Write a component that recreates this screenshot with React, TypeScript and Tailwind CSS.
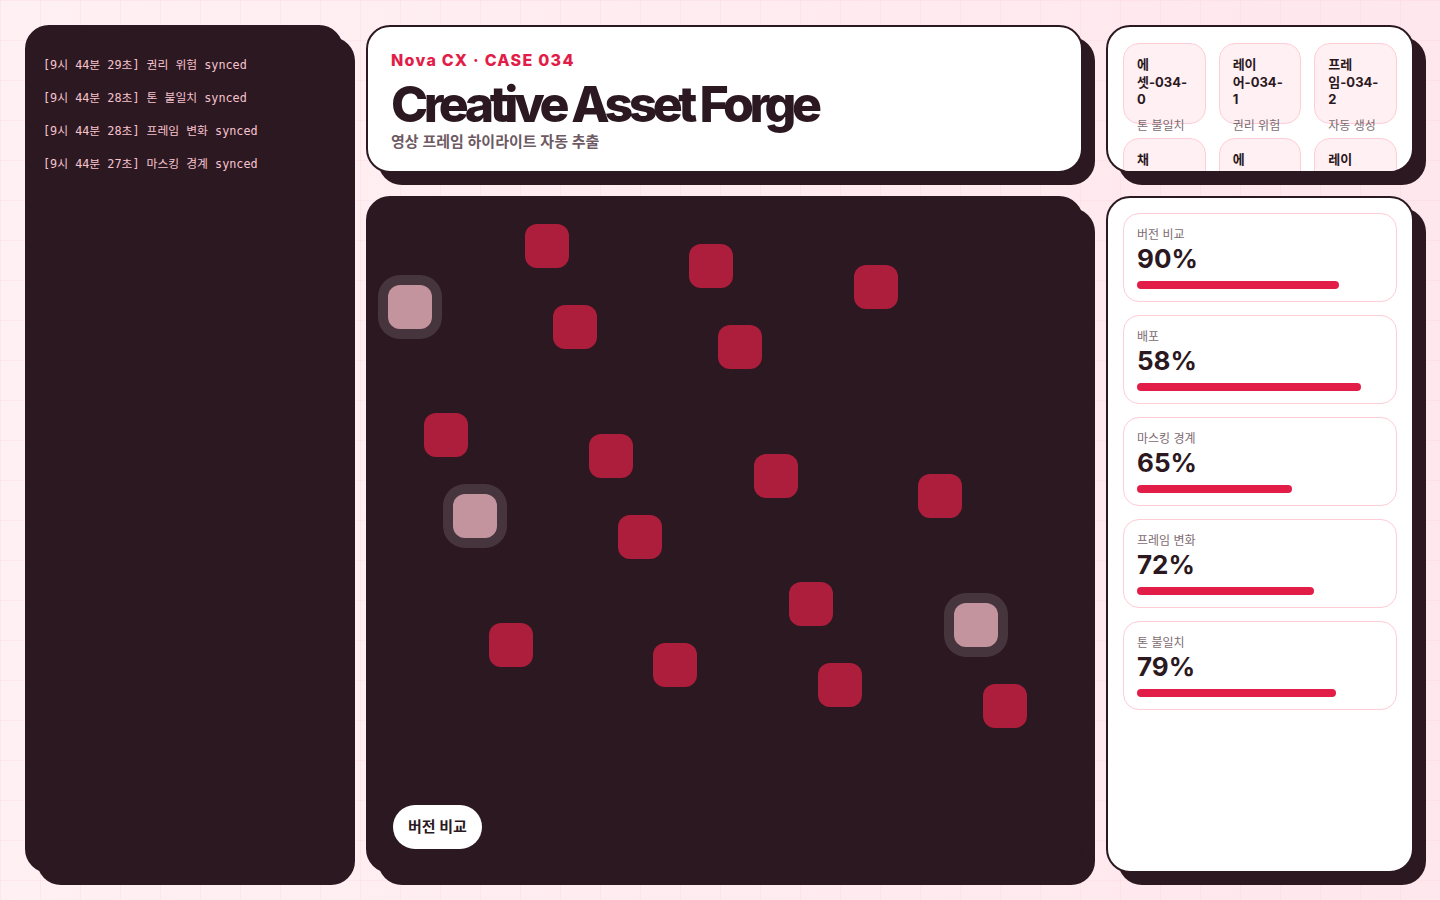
import type { ReactNode } from 'react'

const logs = [
  '[9시 44분 29초] 권리 위험 synced',
  '[9시 44분 28초] 톤 불일치 synced',
  '[9시 44분 28초] 프레임 변화 synced',
  '[9시 44분 27초] 마스킹 경계 synced',
]

const tiles = [
  { name: '에셋-034-0', tag: '톤 불일치' },
  { name: '레이어-034-1', tag: '권리 위험' },
  { name: '프레임-034-2', tag: '자동 생성' },
  { name: '채널-034-3', tag: '마스킹 경계' },
  { name: '에셋-034-4', tag: '프레임 변화' },
  { name: '레이어-034-5', tag: '배포' },
]

const metrics = [
  { label: '버전 비교', value: 90, bar: 202 },
  { label: '배포', value: 58, bar: 224 },
  { label: '마스킹 경계', value: 65, bar: 155 },
  { label: '프레임 변화', value: 72, bar: 177 },
  { label: '톤 불일치', value: 79, bar: 199 },
]

// top-left of each 44px node, relative to the canvas inner box
const nodes: { x: number; y: number; hot?: boolean }[] = [
  { x: 157, y: 26 },
  { x: 321, y: 46 },
  { x: 486, y: 67 },
  { x: 20, y: 87, hot: true },
  { x: 185, y: 107 },
  { x: 350, y: 127 },
  { x: 56, y: 215 },
  { x: 221, y: 236 },
  { x: 386, y: 256 },
  { x: 550, y: 276 },
  { x: 85, y: 296, hot: true },
  { x: 250, y: 317 },
  { x: 421, y: 384 },
  { x: 586, y: 405, hot: true },
  { x: 121, y: 425 },
  { x: 285, y: 445 },
  { x: 450, y: 465 },
  { x: 615, y: 486 },
]

function Panel({ className, children }: { className?: string; children?: ReactNode }) {
  return (
    <div
      className={`rounded-3xl border-2 border-[#2b1821] shadow-[12px_12px_0_#2b1821] ${className ?? ''}`}
    >
      {children}
    </div>
  )
}

export default function App() {
  return (
    <div className="h-[900px] w-full overflow-hidden bg-[#fff0f3] font-['Inter','Noto_Sans_CJK_KR',sans-serif]">
      <div className="h-full w-full bg-[linear-gradient(to_right,rgba(225,29,72,0.045)_1px,transparent_1px),linear-gradient(to_bottom,rgba(225,29,72,0.045)_1px,transparent_1px)] bg-size-[40px_40px]">
        <div className="h-full w-full bg-[linear-gradient(to_right,rgba(255,240,243,0)_0%,rgba(253,205,218,0.25)_100%)]">
          <div className="grid grid-cols-[318px_717px_308px] grid-rows-[148px_677px] gap-[23px] pl-[25px] pt-[25px]">
            {/* activity log */}
            <Panel className="row-span-2 bg-[#2b1821] px-[16px] pt-[30px]">
              <div className="flex flex-col gap-[16px] font-['DejaVu_Sans_Mono','Noto_Sans_CJK_KR',monospace] text-[11.8px] leading-[17px] text-[#f7c2ce]">
                {logs.map((l) => (
                  <div key={l} className="whitespace-pre">
                    {l}
                  </div>
                ))}
              </div>
            </Panel>

            {/* header */}
            <Panel className="bg-white px-[23px] pt-[23px]">
              <div className="text-[16px] leading-[20px] font-extrabold tracking-[0.08em] text-[#e11d48]">
                Nova CX · CASE 034
              </div>
              <h1 className="mt-[9px] text-[50px] leading-[50px] font-extrabold tracking-[-0.09em] text-[#2b1821]">
                Creative Asset Forge
              </h1>
              <div className="mt-[3px] text-[15px] leading-[20px] font-semibold text-[#6e5b63]">
                영상 프레임 하이라이트 자동 추출
              </div>
            </Panel>

            {/* asset tiles */}
            <Panel className="overflow-hidden bg-white px-[15px] pt-[16px]">
              <div className="grid grid-cols-3 gap-x-[13px] gap-y-[14px]">
                {tiles.map((t) => (
                  <div
                    key={t.name}
                    className="h-[81px] rounded-2xl border border-[#fecdd6] bg-[#fff0f3] px-[13px] pt-[12px]"
                  >
                    <div className="text-[13px] leading-[17.5px] font-bold break-words text-[#2b1821]">
                      {t.name}
                    </div>
                    <div className="mt-[9px] text-[12px] leading-[16px] whitespace-nowrap text-[#7d6b72]">
                      {t.tag}
                    </div>
                  </div>
                ))}
              </div>
            </Panel>

            {/* canvas */}
            <Panel className="relative overflow-hidden bg-[#2b1821]">
              {nodes.map((n, i) => (
                <div
                  key={i}
                  className={
                    n.hot
                      ? 'absolute h-[44px] w-[44px] rounded-[12px] bg-[#c4949e] shadow-[0_0_0_10px_rgba(255,255,255,0.13)]'
                      : 'absolute h-[44px] w-[44px] rounded-[12px] bg-[#ad1e3d]'
                  }
                  style={{ left: n.x, top: n.y }}
                />
              ))}
              <button className="absolute bottom-[22px] left-[25px] h-[44px] rounded-full bg-white px-[15px] text-[15px] font-bold text-[#2b1821]">
                버전 비교
              </button>
            </Panel>

            {/* metrics */}
            <Panel className="bg-white p-[15px]">
              <div className="flex flex-col gap-[13px]">
                {metrics.map((m) => (
                  <div
                    key={m.label}
                    className="rounded-2xl border border-[#fecdd6] bg-white px-[13px] pt-[13px] pb-[12px]"
                  >
                    <div className="text-[12px] leading-[16px] text-[#7d6b72]">{m.label}</div>
                    <div className="text-[26px] leading-[31px] font-bold text-[#2b1821]">{m.value}%</div>
                    <div className="mt-[7px] h-[8px] rounded-full bg-[#e11d48]" style={{ width: m.bar }} />
                  </div>
                ))}
              </div>
            </Panel>
          </div>
        </div>
      </div>
    </div>
  )
}
